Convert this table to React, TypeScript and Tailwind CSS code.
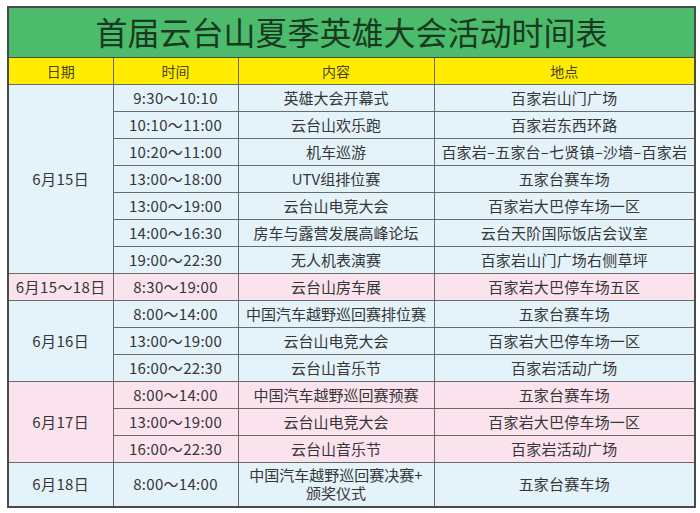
import React from "react";

type Row = { date?: string; span?: number; time: string; what: string; where: string; pink: boolean; tall?: boolean };

const ROWS: Row[] = [
  { date: "6月15日", span: 7, time: "9:30～10:10", what: "英雄大会开幕式", where: "百家岩山门广场", pink: false },
  { time: "10:10～11:00", what: "云台山欢乐跑", where: "百家岩东西环路", pink: false },
  { time: "10:20～11:00", what: "机车巡游", where: "百家岩–五家台–七贤镇–沙墙–百家岩", pink: false },
  { time: "13:00～18:00", what: "UTV组排位赛", where: "五家台赛车场", pink: false },
  { time: "13:00～19:00", what: "云台山电竞大会", where: "百家岩大巴停车场一区", pink: false },
  { time: "14:00～16:30", what: "房车与露营发展高峰论坛", where: "云台天阶国际饭店会议室", pink: false },
  { time: "19:00～22:30", what: "无人机表演赛", where: "百家岩山门广场右侧草坪", pink: false },
  { date: "6月15～18日", span: 1, time: "8:30～19:00", what: "云台山房车展", where: "百家岩大巴停车场五区", pink: true },
  { date: "6月16日", span: 3, time: "8:00～14:00", what: "中国汽车越野巡回赛排位赛", where: "五家台赛车场", pink: false },
  { time: "13:00～19:00", what: "云台山电竞大会", where: "百家岩大巴停车场一区", pink: false },
  { time: "16:00～22:30", what: "云台山音乐节", where: "百家岩活动广场", pink: false },
  { date: "6月17日", span: 3, time: "8:00～14:00", what: "中国汽车越野巡回赛预赛", where: "五家台赛车场", pink: true },
  { time: "13:00～19:00", what: "云台山电竞大会", where: "百家岩大巴停车场一区", pink: true },
  { time: "16:00～22:30", what: "云台山音乐节", where: "百家岩活动广场", pink: true },
  { date: "6月18日", span: 1, time: "8:00～14:00", what: "中国汽车越野巡回赛决赛+\n颁奖仪式", where: "五家台赛车场", pink: false, tall: true },
];

const cell = "border border-[#6b6b6b] text-center align-middle p-0 leading-[18px]";

export default function App() {
  return (
    <div className="w-[700px] h-[513px] bg-white pt-[6px] pl-[7px] font-['Noto_Sans_CJK_SC',sans-serif] text-[#363636]">
      <table className="w-[687px] table-fixed border-collapse border-2 border-[#4a4a4a]">
        <colgroup>
          <col className="w-[105px]" />
          <col className="w-[125px]" />
          <col className="w-[196px]" />
          <col className="w-[261px]" />
        </colgroup>
        <thead>
          <tr className="h-[50px]">
            <th colSpan={4} className="border border-[#4a4a4a] bg-[#4cbb6b] text-[32px] leading-[40px] font-normal text-[#173a20] p-0 pb-[2px]">
              首届云台山夏季英雄大会活动时间表
            </th>
          </tr>
          <tr className="h-[27px] bg-[#ffec00]">
            <th className={`${cell} text-[14px] font-normal text-[#4a4218]`}>日期</th>
            <th className={`${cell} text-[14px] font-normal text-[#4a4218]`}>时间</th>
            <th className={`${cell} text-[14px] font-normal text-[#4a4218]`}>内容</th>
            <th className={`${cell} text-[14px] font-normal text-[#4a4218]`}>地点</th>
          </tr>
        </thead>
        <tbody className="text-[15px]">
          {ROWS.map((r, i) => {
            const bg = r.pink ? "bg-[#fbe3ee]" : "bg-[#e4f2fa]";
            return (
              <tr key={i} className={r.tall ? "h-[45px]" : "h-[27px]"}>
                {r.date && (
                  <td rowSpan={r.span} className={`${cell} ${bg} tracking-[0.4px]`}>
                    {r.date}
                  </td>
                )}
                <td className={`${cell} ${bg} tracking-[0.3px]`}>{r.time}</td>
                <td className={`${cell} ${bg} whitespace-pre-line`}>{r.what}</td>
                <td className={`${cell} ${bg} whitespace-nowrap tracking-[0.2px]`}>{r.where}</td>
              </tr>
            );
          })}
        </tbody>
      </table>
    </div>
  );
}
